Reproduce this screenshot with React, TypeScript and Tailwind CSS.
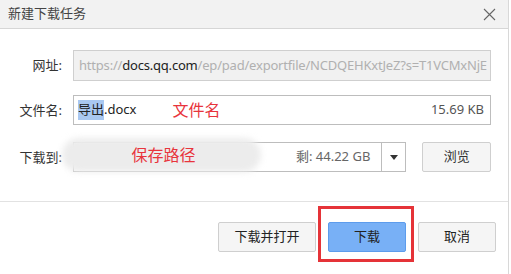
import React from 'react';

const font = { fontFamily: '"Noto Sans", "Noto Sans CJK SC", sans-serif' };

const Label: React.FC<{ text: string }> = ({ text }) => (
  <div className="w-[62px] shrink-0 text-right text-[13px] text-[#333] leading-none">{text}</div>
);

const Btn: React.FC<{ text: string; w: string; primary?: boolean }> = ({ text, w, primary }) => (
  <button
    className={
      primary
        ? `${w} h-[30px] rounded-[2px] border border-[#5d9cec] bg-[#78b0f6] text-[13px] text-[#222]`
        : `${w} h-[30px] rounded-[2px] border border-[#cfcfcf] bg-[#f5f5f5] text-[13px] text-[#222]`
    }
  >
    {text}
  </button>
);

export default function App() {
  return (
    <div className="w-[511px] h-[274px] bg-white overflow-hidden" style={font}>
      <div className="w-[509px] h-[274px] border-r border-[#d8d8d8] flex flex-col">
        {/* Title bar */}
        <div className="h-[29px] shrink-0 bg-[#f2f2f2] border-b border-[#d6d6d6] flex items-center justify-between pl-[8px] pr-[12px]">
          <span className="text-[13px] text-[#444]">新建下载任务</span>
          <svg width="13" height="13" viewBox="0 0 13 13">
            <path d="M1 1 L12 12 M12 1 L1 12" stroke="#666" strokeWidth="1.1" fill="none" />
          </svg>
        </div>

        {/* Form */}
        <div className="flex flex-col pt-[21px] pr-[17px]">
          <div className="flex items-center gap-[11px] h-[31px]">
            <Label text="网址:" />
            <div className="flex-1 h-[31px] border border-[#cfcfcf] bg-[#f1f1f1] flex items-center pl-[5px] overflow-hidden whitespace-nowrap text-[13px] tracking-[-0.2px] text-[#b0b0b0]">
              https://<span className="text-[#222]">docs.qq.com</span>/ep/pad/exportfile/NCDQEHKxtJeZ?s=T1VCMxNjE
            </div>
          </div>

          <div className="flex items-center gap-[11px] h-[30px] mt-[14px]">
            <Label text="文件名:" />
            <div className="flex-1 h-[30px] border border-[#bdbdbd] flex items-center pl-[4px] pr-[6px] text-[13px] text-[#222]">
              <span className="bg-[#a9c8f1]">导出</span>.docx
              <span className="ml-[36px] text-[16px] text-[#e8343c]">文件名</span>
              <span className="ml-auto text-[#555]">15.69 KB</span>
            </div>
          </div>

          <div className="relative flex items-center gap-[11px] h-[30px] mt-[17px]">
            <Label text="下载到:" />
            <div className="w-[340px] h-[30px] border border-[#bdbdbd] flex items-center">
              <span className="flex-1 text-right pr-[11px] text-[13px] text-[#666]">剩: 44.22 GB</span>
              <div className="w-[24px] h-full border-l border-[#bdbdbd] flex items-center justify-center">
                <svg width="8" height="5" viewBox="0 0 8 5">
                  <path d="M0 0 L8 0 L4 5 Z" fill="#333" />
                </svg>
              </div>
            </div>
            <button className="ml-[5px] w-[70px] h-[30px] rounded-[2px] border border-[#cfcfcf] bg-[#f5f5f5] text-[13px] text-[#333]">
              浏览
            </button>
            {/* blurred annotation */}
            <div className="absolute left-[62px] top-[-4px] w-[199px] h-[34px] rounded-full bg-[#ececec] blur-[3px]" />
            <div className="absolute left-[62px] top-[-4px] w-[199px] h-[34px] flex items-center justify-center text-[16px] text-[#e8343c]">
              <span className="ml-[4px]">保存路径</span>
            </div>
          </div>
        </div>

        {/* Divider + buttons */}
        <div className="mt-[29px] border-t border-[#e2e2e2]" />
        <div className="flex justify-end gap-[12px] pt-[20px] pr-[12px]">
          <Btn text="下载并打开" w="w-[98px]" />
          <div className="relative">
            <Btn text="下载" w="w-[78px]" primary />
            <div className="absolute left-[-10px] top-[-16px] w-[96px] h-[56px] border-[3px] border-[#e53338]" />
          </div>
          <Btn text="取消" w="w-[78px]" />
        </div>
      </div>
    </div>
  );
}
